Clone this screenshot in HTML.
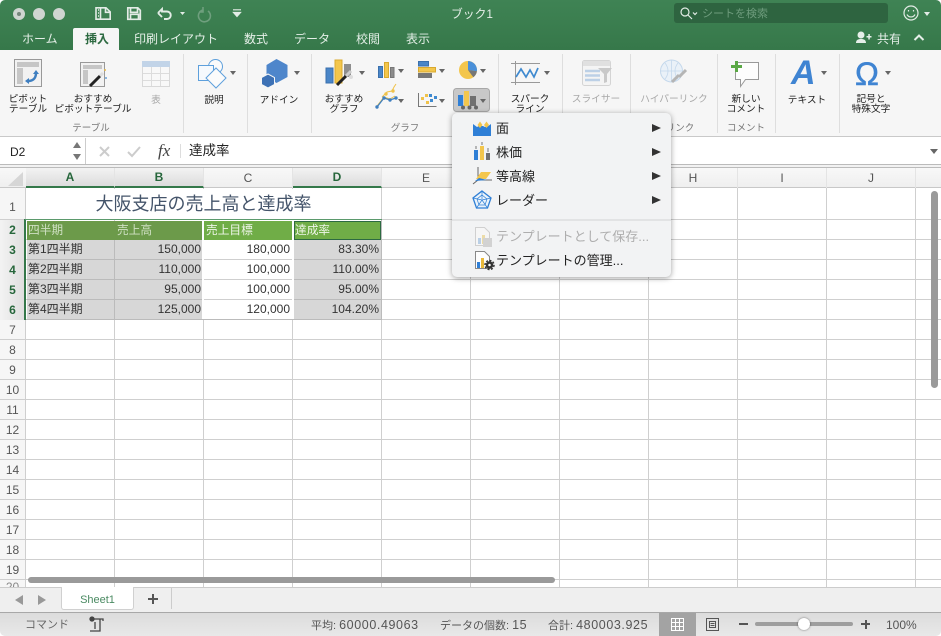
<!DOCTYPE html>
<html lang="ja"><head><meta charset="utf-8"><style>
*{box-sizing:border-box}
html,body{margin:0;padding:0;width:941px;height:636px;overflow:hidden;background:#fff}
body{font-family:"Liberation Sans","Noto Sans CJK JP",sans-serif;position:relative}
.a{position:absolute;white-space:nowrap}
.t{position:absolute;white-space:nowrap;font-size:12px;color:#e4efe7;line-height:16px;top:31px}
.r{position:absolute;font-size:9.7px;line-height:10px;text-align:center;color:#222;white-space:nowrap;transform:translateX(-50%)}
.g{color:#a9a9a9}
.gl{position:absolute;font-size:9.5px;color:#777;top:123px;line-height:12px;white-space:nowrap;transform:translateX(-50%)}
.sep{position:absolute;top:54px;height:79px;width:1px;background:#dedede}
.ch{position:absolute;top:168px;height:20px;font-size:12px;line-height:20px;text-align:center;color:#555;width:89px;border-right:1px solid #e4e4e4}
.sel{background:linear-gradient(#f3f3f3,#dcdcdc);color:#26663b;font-weight:bold;border-bottom:2px solid #34784a;line-height:19px}
.rh{position:absolute;left:0;width:25px;text-align:center;font-size:12px;line-height:20px;height:20px;color:#555}
.rs{color:#26663b;font-weight:bold;background:linear-gradient(90deg,#f3f3f3,#dedede)}
.c{position:absolute;height:20px;font-size:12px;line-height:19px;color:#333;padding:0 2px 0 1px;white-space:nowrap;overflow:hidden}
.h{font-size:11.7px;line-height:21px}
.n{text-align:right}
.gr{background:#d7d7d7;height:19px}
.m{position:absolute;left:44px;font-size:13px;color:#222;line-height:16px;white-space:nowrap}
.ar{position:absolute;left:200px;width:0;height:0;border-left:9px solid #333;border-top:4.5px solid transparent;border-bottom:4.5px solid transparent}
.dd{position:absolute;width:0;height:0;border-left:3px solid transparent;border-right:3px solid transparent;border-top:4px solid #666}
.st{position:absolute;top:618px;font-size:11px;line-height:15px;color:#555;white-space:nowrap}
.st b{font-weight:normal;font-size:12.5px;letter-spacing:.6px}
</style></head><body>

<!-- title bar -->
<div class="a" style="left:0;top:0;width:941px;height:50px;background:linear-gradient(#3f8354,#36784a);border-radius:5px 5px 0 0"></div>
<div class="a" style="left:13px;top:8px;width:12px;height:12px;border-radius:50%;background:#cfd5d1"></div>
<div class="a" style="left:17px;top:12px;width:4px;height:4px;border-radius:50%;background:#75857b"></div>
<div class="a" style="left:33px;top:8px;width:12px;height:12px;border-radius:50%;background:#cfd5d1"></div>
<div class="a" style="left:53px;top:8px;width:12px;height:12px;border-radius:50%;background:#cfd5d1"></div>
<svg class="a" style="left:90px;top:3px" width="160" height="22" fill="none" stroke="#e3ece6" stroke-width="1.600">
<path d="M6 4.800h10l4.200 4v7.400H6zM10.500 4.800v11.400M15.500 4.800v4.500h4.700M8 7h1M8 10h1M8 13h1"/>
<path d="M37.800 4.800h10l2.500 2.500v9H37.800zM40.500 4.800v4.500h7V4.800M40.500 16.300v-5h8v5" stroke-width="1.700"/>
<path d="M68 10l4-4v2.500h5a3.700 3.700 0 0 1 0 7.500h-3M68 10l4 4" stroke-width="1.900"/>
<path d="M90 9h5l-2.500 3z" fill="#e3ece6" stroke="none"/>
<path d="M113 7a6 6 0 1 0 5 1M113 4v5h-4" stroke="#6f9f7e"/>
<path d="M143 6.800h8M143.500 9.500h7l-3.500 4z" fill="#e3ece6" stroke-width="1.200"/>
</svg>
<div class="a" style="left:451px;top:6px;font-size:11.800px;line-height:16px;color:#e6efe9">ブック1</div>
<div class="a" style="left:674px;top:3px;width:214px;height:20px;border-radius:3px;background:#2e6440"></div>
<svg class="a" style="left:678px;top:6px" width="20" height="14" fill="none" stroke="#e3ece6" stroke-width="1.200"><circle cx="7" cy="6" r="4"/><path d="M10 9l4 4M15 6.500l2 2 2-2"/></svg>
<div class="a" style="left:702px;top:7px;font-size:11px;line-height:15px;color:#6e9c7d">シートを検索</div>
<svg class="a" style="left:902px;top:3px" width="30" height="20" fill="none" stroke="#e3ece6" stroke-width="1.200"><circle cx="9" cy="10" r="7"/><path d="M5 11.500a4.500 4.500 0 0 0 8 0M6.500 7v1.500M11.500 7v1.500"/><path d="M22 9h6l-3 4z" fill="#e3ece6" stroke="none"/></svg>

<!-- tabs -->
<div class="t" style="left:22px">ホーム</div>
<div class="a" style="left:73px;top:28px;width:46px;height:22px;background:#f6f6f6;border-radius:2px 2px 0 0"></div>
<div class="t" style="left:85px;color:#2d6a41;font-weight:bold">挿入</div>
<div class="t" style="left:134px">印刷レイアウト</div>
<div class="t" style="left:244px">数式</div>
<div class="t" style="left:294px">データ</div>
<div class="t" style="left:356px">校閲</div>
<div class="t" style="left:406px">表示</div>
<svg class="a" style="left:855px;top:30px" width="18" height="15" fill="#e6efe9"><circle cx="6" cy="5" r="3.500"/><path d="M1 13c0-3 2-4 5-4s5 1 5 4zM11.500 6h5v1.500h-5zM13.300 4h1.500v5.500h-1.500z"/></svg>
<div class="t" style="left:877px;color:#e6efe9">共有</div>
<svg class="a" style="left:913px;top:33px" width="12" height="9" fill="none" stroke="#e6efe9" stroke-width="2"><path d="M1.500 7L6 2.500 10.500 7"/></svg>

<!-- ribbon -->
<div class="a" style="left:0;top:50px;width:941px;height:87px;background:#f6f6f6;border-bottom:1px solid #c9c9c9"></div>
<div class="sep" style="left:183px"></div><div class="sep" style="left:247px"></div><div class="sep" style="left:311px"></div>
<div class="sep" style="left:498px"></div><div class="sep" style="left:562px"></div><div class="sep" style="left:630px"></div>
<div class="sep" style="left:717px"></div><div class="sep" style="left:775px"></div><div class="sep" style="left:839px"></div>

<svg class="a" style="left:0;top:50px" width="941" height="75" fill="none">
<!-- pivot -->
<rect x="14.500" y="9.500" width="27" height="27" fill="#f2f2f2" stroke="#999"/>
<rect x="17" y="12" width="22" height="5" fill="#c6c6c6"/><rect x="17" y="18" width="6" height="16" fill="#c6c6c6"/>
<path d="M28 31c4 0 8-2 8-8" stroke="#3f7fc0" stroke-width="2.500"/><path d="M33 24l3-4 3 4zM29 28l-4 3 4 3z" fill="#3f7fc0"/>
<!-- recommended pivot -->
<rect x="80.500" y="12.500" width="24" height="24" fill="#f2f2f2" stroke="#999"/>
<rect x="83" y="15" width="19" height="4" fill="#c6c6c6"/><rect x="83" y="20" width="5" height="14" fill="#c6c6c6"/>
<path d="M90 36l10-10" stroke="#222" stroke-width="3"/><path d="M100 26l3-3" stroke="#ddd" stroke-width="3"/><circle cx="105" cy="20" r="1" fill="#e8b94a"/><circle cx="106" cy="28" r="1" fill="#6aa3d8"/>
<!-- table -->
<rect x="142.500" y="11.500" width="27" height="25" fill="#f8f8f8" stroke="#d8d8d8"/><rect x="142" y="11" width="28" height="6" fill="#c2d4e8"/>
<path d="M151.500 17v19M160.500 17v19M143 23.500h26M143 30.500h26" stroke="#dcdcdc"/>
<!-- illustrations -->
<circle cx="215.500" cy="16.500" r="7" fill="#fbfbfb" stroke="#5ea0dc"/>
<rect x="198.500" y="15.500" width="15" height="15" fill="#f5f9fd" stroke="#5ea0dc"/>
<path d="M216 18l10 10-10 10-10-10z" fill="#fbfbfb" stroke="#5ea0dc"/>
<!-- addin -->
<path d="M276.500 9l11 6v12l-11 6-10-6V15z" fill="#4e86cb"/><path d="M268 24l6.500 3.500v7L268 38l-6.500-3.500v-7z" fill="#3d71b5" stroke="#f6f6f6"/>
<!-- recommended chart -->
<rect x="326" y="18" width="7" height="15" fill="#4a86c8" stroke="#3a70ad"/><rect x="335" y="10" width="7" height="23" fill="#f3c64c" stroke="#d9a92f"/><rect x="344" y="14" width="7" height="13" fill="#8e8e8e"/>
<path d="M337 35l9-9" stroke="#222" stroke-width="3"/><path d="M346 26l5-5" stroke="#ccc" stroke-width="3"/><circle cx="351" cy="27" r="2" fill="#ddd"/>
<!-- col -->
<rect x="378.500" y="16.500" width="4" height="11" fill="#4a86c8" stroke="#3a70ad"/><rect x="384.500" y="12.500" width="4" height="15" fill="#f3c64c" stroke="#d9a92f"/><rect x="390.500" y="17.500" width="3.500" height="10" fill="#8c8c8c" stroke="#777"/>
<!-- bar -->
<rect x="418.500" y="11.500" width="10" height="4.500" fill="#4a86c8" stroke="#3a70ad"/><rect x="418.500" y="17.500" width="17" height="4.500" fill="#f3c64c" stroke="#d9a92f"/><rect x="418" y="23" width="14" height="5" fill="#777"/>
<!-- pie -->
<circle cx="468" cy="20" r="9" fill="#f3c64c"/><path d="M468 20V11a9 9 0 0 1 8.900 10.300z" fill="#4a90d9"/><path d="M468 20l8.900 1.300a9 9 0 0 1-3.600 6z" fill="#777"/>
<!-- line -->
<path d="M377 56l7-9 6 2 5-3M382 47l5-5 5-1 2-4 2-3" stroke="#f0c24a" stroke-width="1"/><path d="M377 57l7-9 6 2 6-2" stroke="#3f7fc0" stroke-width="1.300"/>
<circle cx="377" cy="57" r="1.700" fill="#3f7fc0"/><circle cx="384" cy="48" r="1.700" fill="#3f7fc0"/><circle cx="390" cy="50" r="1.700" fill="#3f7fc0"/><circle cx="396" cy="48" r="1.700" fill="#3f7fc0"/><circle cx="386" cy="44" r="1.700" fill="#f0c24a"/><circle cx="393" cy="41" r="1.700" fill="#f0c24a"/>
<!-- scatter -->
<path d="M418.500 43v13.500h18" stroke="#777"/><g fill="#f0c24a"><rect x="421" y="47" width="3" height="3"/><rect x="425" y="44" width="3" height="3"/><rect x="426" y="51" width="3" height="3"/></g><g fill="#3f8ad0"><rect x="430" y="49" width="3" height="3"/><rect x="434" y="46" width="3" height="3"/><rect x="429" y="44" width="3" height="3"/></g>
<!-- active -->
<rect x="453.500" y="38.500" width="36" height="23" rx="3" fill="#c8c8c8" stroke="#a8a8a8"/>
<rect x="458" y="45" width="5" height="11" fill="#2f7fd6"/><rect x="464" y="41" width="5" height="15" fill="#f3c64c"/><rect x="470" y="46" width="6" height="10" fill="#707070"/>
<circle cx="463" cy="57.500" r="2" fill="#666"/><circle cx="469.500" cy="57.500" r="2" fill="#666"/><circle cx="476" cy="57.500" r="2" fill="#666"/>
<!-- sparkline -->
<path d="M511 13.500h29M511 32.500h29M515.500 11v24" stroke="#999"/><path d="M516 27l5-8 5 8 4-7 4 7 4-9" stroke="#3f8ad0" stroke-width="1.700"/>
<!-- slicer -->
<rect x="582.500" y="10.500" width="28" height="25" rx="2" fill="#f4f4f4" stroke="#d4d4d4"/><rect x="583" y="11" width="27" height="5" fill="#e0e0e0"/><path d="M585 21h15M585 25.500h15M585 30h15" stroke="#bcd0e6" stroke-width="2.500"/><path d="M598 18h14l-5 6v8l-3 1v-9z" fill="#c9c9c9"/>
<!-- link -->
<circle cx="671.500" cy="21" r="11" fill="#eaf1f8" stroke="#c4d8ec"/><path d="M660.500 21h22M671.500 10v22M665 13c4 5 4 11 0 16M678 13c-4 5-4 11 0 16" stroke="#c4d8ec" stroke-width=".8"/><path d="M672 32l7-7m0 2l7-7" stroke="#b5b5b5" stroke-width="3"/>
<!-- comment -->
<path d="M735.500 12.500h23v17h-13l-5 7v-7h-5z" fill="#fdfdfd" stroke="#999"/><path d="M736.500 11v11M731 16.500h11" stroke="#5aa845" stroke-width="3"/>
<!-- text -->
<text x="791" y="34" font-family="Liberation Sans" font-style="italic" font-weight="bold" font-size="34" fill="#3f84d2">A</text>
<!-- omega -->
<text x="855" y="35" font-family="Liberation Sans" font-size="32" fill="#3f84d2" stroke="#3f84d2" stroke-width=".5">Ω</text>
</svg>

<div class="dd" style="left:230px;top:71px"></div><div class="dd" style="left:294px;top:71px"></div>
<div class="dd" style="left:359px;top:71px"></div><div class="dd" style="left:398px;top:69px"></div><div class="dd" style="left:439px;top:69px"></div><div class="dd" style="left:480px;top:69px"></div>
<div class="dd" style="left:398px;top:99px"></div><div class="dd" style="left:439px;top:99px"></div><div class="dd" style="left:480px;top:99px"></div>
<div class="dd" style="left:544px;top:71px"></div><div class="dd" style="left:821px;top:71px"></div><div class="dd" style="left:885px;top:71px"></div>

<div class="r" style="left:28px;top:95px">ピボット<br>テーブル</div>
<div class="r" style="left:93px;top:95px">おすすめ<br>ピボットテーブル</div>
<div class="r g" style="left:156px;top:96px">表</div>
<div class="r" style="left:214px;top:96px">説明</div>
<div class="r" style="left:279px;top:96px">アドイン</div>
<div class="r" style="left:344px;top:95px">おすすめ<br>グラフ</div>
<div class="r" style="left:530px;top:95px">スパーク<br>ライン</div>
<div class="r g" style="left:596px;top:95px">スライサー</div>
<div class="r g" style="left:674px;top:95px">ハイパーリンク</div>
<div class="r" style="left:746px;top:95px">新しい<br>コメント</div>
<div class="r" style="left:807px;top:96px">テキスト</div>
<div class="r" style="left:871px;top:95px">記号と<br>特殊文字</div>
<div class="gl" style="left:91px">テーブル</div>
<div class="gl" style="left:405px">グラフ</div>
<div class="gl" style="left:680px">リンク</div>
<div class="gl" style="left:746px">コメント</div>

<!-- formula bar -->
<div class="a" style="left:0;top:137px;width:941px;height:28px;background:#fff;border-bottom:1px solid #bbb"></div>
<div class="a" style="left:0;top:138px;width:86px;height:26px;border-right:1px solid #ccc"></div>
<div class="a" style="left:10px;top:144px;font-size:12px;line-height:16px;color:#222">D2</div>
<div class="a" style="left:73px;top:142px;width:0;height:0;border-left:4px solid transparent;border-right:4px solid transparent;border-bottom:6px solid #777"></div>
<div class="a" style="left:73px;top:154px;width:0;height:0;border-left:4px solid transparent;border-right:4px solid transparent;border-top:6px solid #777"></div>
<svg class="a" style="left:98px;top:144px" width="50" height="15" fill="none" stroke="#ccc" stroke-width="2"><path d="M2 3l9 9M11 3l-9 9M30 8l4 4 8-9"/></svg>
<div class="a" style="left:158px;top:141px;font-family:'Liberation Serif',serif;font-style:italic;font-size:17px;line-height:20px;color:#444">fx</div>
<div class="a" style="left:180px;top:144px;width:1px;height:14px;background:#ddd"></div>
<div class="a" style="left:189px;top:143px;font-size:13.500px;line-height:16px;color:#222">達成率</div>
<div class="a" style="left:930px;top:149px;width:0;height:0;border-left:4px solid transparent;border-right:4px solid transparent;border-top:5px solid #666"></div>

<!-- sheet -->
<div class="a" style="left:0;top:165px;width:941px;height:3px;background:#f2f2f2;border-bottom:1px solid #bbb"></div>
<div class="a" style="left:0;top:168px;width:941px;height:20px;background:linear-gradient(#f8f8f8,#efefef);border-bottom:1px solid #c8c8c8"></div>
<div class="a" style="left:0;top:188px;width:25px;height:399px;background:#f6f6f6"></div>
<div class="a" style="left:8px;top:172px;width:0;height:0;border-left:15px solid transparent;border-bottom:14px solid #d6d6d6"></div>
<svg class="a" style="left:0;top:168px" width="941" height="419" stroke="#cfcfcf" shape-rendering="crispEdges">
<path d="M25.500 20V419M114.500 20V419M203.500 20V419M292.500 20V419M381.500 20V419M470.500 20V419M559.500 20V419M648.500 20V419M737.500 20V419M826.500 20V419M915.500 20V419"/>
<path d="M0 51.500H941M0 71.500H941M0 91.500H941M0 111.500H941M0 131.500H941M0 151.500H941M0 171.500H941M0 191.500H941M0 211.500H941M0 231.500H941M0 251.500H941M0 271.500H941M0 291.500H941M0 311.500H941M0 331.500H941M0 351.500H941M0 371.500H941M0 391.500H941M0 411.500H941"/>
</svg>

<div class="ch sel" style="left:26px">A</div><div class="ch sel" style="left:115px">B</div>
<div class="ch" style="left:204px">C</div><div class="ch sel" style="left:293px">D</div>
<div class="ch" style="left:382px">E</div><div class="ch" style="left:471px">F</div><div class="ch" style="left:560px">G</div>
<div class="ch" style="left:649px">H</div><div class="ch" style="left:738px">I</div><div class="ch" style="left:827px">J</div>

<div class="rh" style="top:197px">1</div>
<div class="rh rs" style="top:220px">2</div><div class="rh rs" style="top:240px">3</div><div class="rh rs" style="top:260px">4</div><div class="rh rs" style="top:280px">5</div><div class="rh rs" style="top:300px">6</div>
<div class="rh" style="top:340px">8</div><div class="rh" style="top:320px">7</div><div class="rh" style="top:360px">9</div>
<div class="rh" style="top:380px">10</div><div class="rh" style="top:400px">11</div><div class="rh" style="top:420px">12</div><div class="rh" style="top:440px">13</div><div class="rh" style="top:460px">14</div><div class="rh" style="top:480px">15</div><div class="rh" style="top:500px">16</div><div class="rh" style="top:520px">17</div><div class="rh" style="top:540px">18</div><div class="rh" style="top:560px">19</div>
<div class="rh" style="top:580px;height:7px;overflow:hidden;color:#888;line-height:14px">20</div>

<!-- title cell -->
<div class="a" style="left:26px;top:189px;width:355px;height:30px;background:#fff;text-align:center;font-size:18px;line-height:30px;color:#44546a">大阪支店の売上高と達成率</div>

<!-- data -->
<div class="a" style="left:27px;top:240px;width:175px;height:80px;background:#bbb"></div>
<div class="a" style="left:294px;top:240px;width:87px;height:80px;background:#bbb"></div>
<div class="a" style="left:202px;top:220px;width:2px;height:100px;background:#fff"></div>
<div class="a" style="left:292px;top:220px;width:2px;height:100px;background:#fff"></div>
<div class="a" style="left:27px;top:221px;width:175px;height:19px;background:#6c9a4a"></div>
<div class="a" style="left:204px;top:221px;width:88px;height:19px;background:#70ad47"></div>
<div class="a" style="left:294px;top:221px;width:87px;height:19px;background:#70ad47;border:1px solid #2d6a41"></div>
<div class="c h" style="left:27px;top:220px;color:#cfe0c3">四半期</div>
<div class="c h" style="left:116px;top:220px;color:#cfe0c3">売上高</div>
<div class="c h" style="left:205px;top:220px;color:#eef5e8">売上目標</div>
<div class="c h" style="left:294px;top:220px;color:#eef5e8">達成率</div>

<div class="c gr" style="left:27px;top:240px;width:87px">第1四半期</div><div class="c gr n" style="left:115px;top:240px;width:87px;padding-right:1px">150,000</div><div class="c n" style="left:204px;top:240px;width:88px;height:19px;background:#fff">180,000</div><div class="c gr n" style="left:294px;top:240px;width:87px">83.30%</div>
<div class="c gr" style="left:27px;top:260px;width:87px">第2四半期</div><div class="c gr n" style="left:115px;top:260px;width:87px;padding-right:1px">110,000</div><div class="c n" style="left:204px;top:260px;width:88px;height:19px;background:#fff">100,000</div><div class="c gr n" style="left:294px;top:260px;width:87px">110.00%</div>
<div class="c gr" style="left:27px;top:280px;width:87px">第3四半期</div><div class="c gr n" style="left:115px;top:280px;width:87px;padding-right:1px">95,000</div><div class="c n" style="left:204px;top:280px;width:88px;height:19px;background:#fff">100,000</div><div class="c gr n" style="left:294px;top:280px;width:87px">95.00%</div>
<div class="c gr" style="left:27px;top:300px;width:87px">第4四半期</div><div class="c gr n" style="left:115px;top:300px;width:87px;padding-right:1px">125,000</div><div class="c n" style="left:204px;top:300px;width:88px;height:19px;background:#fff">120,000</div><div class="c gr n" style="left:294px;top:300px;width:87px">104.20%</div>

<!-- selection borders -->
<div class="a" style="left:24px;top:219px;width:2px;height:101px;background:#34784a"></div>
<div class="a" style="left:25px;top:219px;width:357px;height:1px;background:#5b9a6c"></div>
<div class="a" style="left:26px;top:319px;width:356px;height:1px;background:#bbb"></div>
<div class="a" style="left:381px;top:220px;width:1px;height:100px;background:#bbb"></div>

<!-- scrollbars -->
<div class="a" style="left:931px;top:191px;width:7px;height:197px;border-radius:4px;background:#9a9a9a"></div>
<div class="a" style="left:28px;top:577px;width:527px;height:6px;border-radius:3px;background:#9a9a9a"></div>

<!-- menu -->
<div class="a" style="left:452px;top:113px;width:219px;height:164px;border-radius:5px;background:#f2f3f4;box-shadow:0 1px 6px rgba(0,0,0,.38)">
<svg class="a" style="left:0;top:0" width="60" height="164" fill="none">
<path d="M21 23V11l4 3 2-1h4l2 1h2l4-3v12z" fill="#2f7fd6"/><path d="M25.500 12l2.500-3.500 2.500 3.500-2.500 3zM32 12l2.500-3.500 2.500 3.500-2.500 3z" fill="#f3c64c"/>
<rect x="22" y="37" width="4" height="10" fill="#2f7fd6"/><rect x="28" y="33" width="4" height="14" fill="#f3c64c"/><rect x="34" y="40" width="4" height="7" fill="#707070"/><path d="M24 33v3M30 29v3M36 35v4" stroke="#777"/>
<path d="M26 54v12M21 71l5-4h14" stroke="#666"/><path d="M24 66l5-7h10l-5 7z" fill="#f3c64c"/><path d="M23 68l4-3 8 2z" fill="#2f7fd6"/>
<path d="M30 78l9 7-3.500 10h-11L21 85z" fill="#eaf3fb" stroke="#2f7fd6" stroke-width="1.300"/><path d="M30 82l5 4-2 6h-6l-2-6zM30 78v8M21 85l9 2 9-2M24.500 95l5.500-8 5.500 8" stroke="#2f7fd6" stroke-width=".7"/>
<path d="M23.500 114.500h9l5 5v13h-14z" fill="#f6f6f6" stroke="#d0d0d0"/><rect x="26" y="125" width="3" height="6" fill="#b9cfe6"/><rect x="30" y="122" width="3" height="9" fill="#ecdca8"/><rect x="31" y="125" width="9" height="9" fill="#d2d2d2"/>
<path d="M23.500 138.500h9l5 5v12h-14z" fill="#fdfdfd" stroke="#888"/><rect x="25" y="149" width="3" height="6" fill="#2f7fd6"/><rect x="29" y="145" width="3" height="10" fill="#e9b93a"/><circle cx="37.500" cy="152" r="2.500" fill="#fff" stroke="#333" stroke-width="2.500"/><circle cx="37.500" cy="152" r="4.500" stroke="#333" stroke-dasharray="2 1.500" stroke-width="1.500"/>
</svg>
<div class="m" style="top:8px">面</div>
<div class="m" style="top:32px">株価</div>
<div class="m" style="top:56px">等高線</div>
<div class="m" style="top:80px">レーダー</div>
<div class="ar" style="top:11px"></div><div class="ar" style="top:35px"></div><div class="ar" style="top:59px"></div><div class="ar" style="top:83px"></div>
<div class="a" style="left:0;top:106px;width:219px;height:2px;background:#e2e3e4"></div>
<div class="m" style="top:116px;color:#aeaeae">テンプレートとして保存...</div>
<div class="m" style="top:140px">テンプレートの管理...</div>
</div>

<!-- tab bar -->
<div class="a" style="left:0;top:587px;width:941px;height:26px;background:#efefef;border-top:1px solid #ccc;border-bottom:1px solid #a8a8a8"></div>
<div class="a" style="left:15px;top:595px;width:0;height:0;border-right:8px solid #999;border-top:5.500px solid transparent;border-bottom:5.500px solid transparent"></div>
<div class="a" style="left:38px;top:595px;width:0;height:0;border-left:8px solid #999;border-top:5.500px solid transparent;border-bottom:5.500px solid transparent"></div>
<div class="a" style="left:61px;top:587px;width:73px;height:23px;background:#fff;border:1px solid #d0d0d0;border-top:none;border-radius:0 0 3px 3px;text-align:center;font-size:11px;line-height:27px;color:#4a8a62">Sheet1</div>
<div class="a" style="left:148px;top:598px;width:10px;height:2px;background:#555"></div>
<div class="a" style="left:152px;top:594px;width:2px;height:10px;background:#555"></div>
<div class="a" style="left:171px;top:588px;width:1px;height:21px;background:#ccc"></div>

<!-- status bar -->
<div class="a" style="left:0;top:613px;width:941px;height:23px;background:linear-gradient(#dcdcdc,#e8e8e8);border-radius:0 0 5px 5px"></div>
<div class="st" style="left:25px;color:#666">コマンド</div>
<svg class="a" style="left:88px;top:616px" width="18" height="17" fill="none" stroke="#444" stroke-width="1.300"><circle cx="4" cy="3" r="2" fill="#444"/><path d="M6 3h6v12H2M12 3h3v2M7 6v7M3 15h9" /></svg>
<div class="st" style="left:311px">平均: <b>60000.49063</b></div>
<div class="st" style="left:440px">データの個数: <b>15</b></div>
<div class="st" style="left:548px">合計: <b>480003.925</b></div>
<div class="a" style="left:659px;top:613px;width:37px;height:23px;background:#a3a3a3"></div>
<svg class="a" style="left:670px;top:617px" width="15" height="15" fill="#f5f5f5" stroke="#fff"><path d="M1.500 1.500h12v12h-12zM1.500 5.500h12M1.500 9.500h12M5.500 1.500v12M9.500 1.500v12" fill="none"/></svg>
<svg class="a" style="left:705px;top:617px" width="15" height="15" fill="none" stroke="#555"><path d="M1.500 1.500h12v12h-12zM4.500 4.500h6v6h-6zM5.500 6.500h4M5.500 8.500h4"/></svg>
<div class="a" style="left:739px;top:623px;width:9px;height:2px;background:#555"></div>
<div class="a" style="left:755px;top:622px;width:98px;height:4px;border-radius:2px;background:#9e9e9e"></div>
<div class="a" style="left:798px;top:618px;width:12px;height:12px;border-radius:50%;background:#fff;box-shadow:0 0 2px rgba(0,0,0,.5)"></div>
<div class="a" style="left:861px;top:623px;width:9px;height:2px;background:#555"></div>
<div class="a" style="left:864.500px;top:620px;width:2px;height:9px;background:#555"></div>
<div class="st" style="left:886px;font-size:12px">100%</div>
</body></html>
